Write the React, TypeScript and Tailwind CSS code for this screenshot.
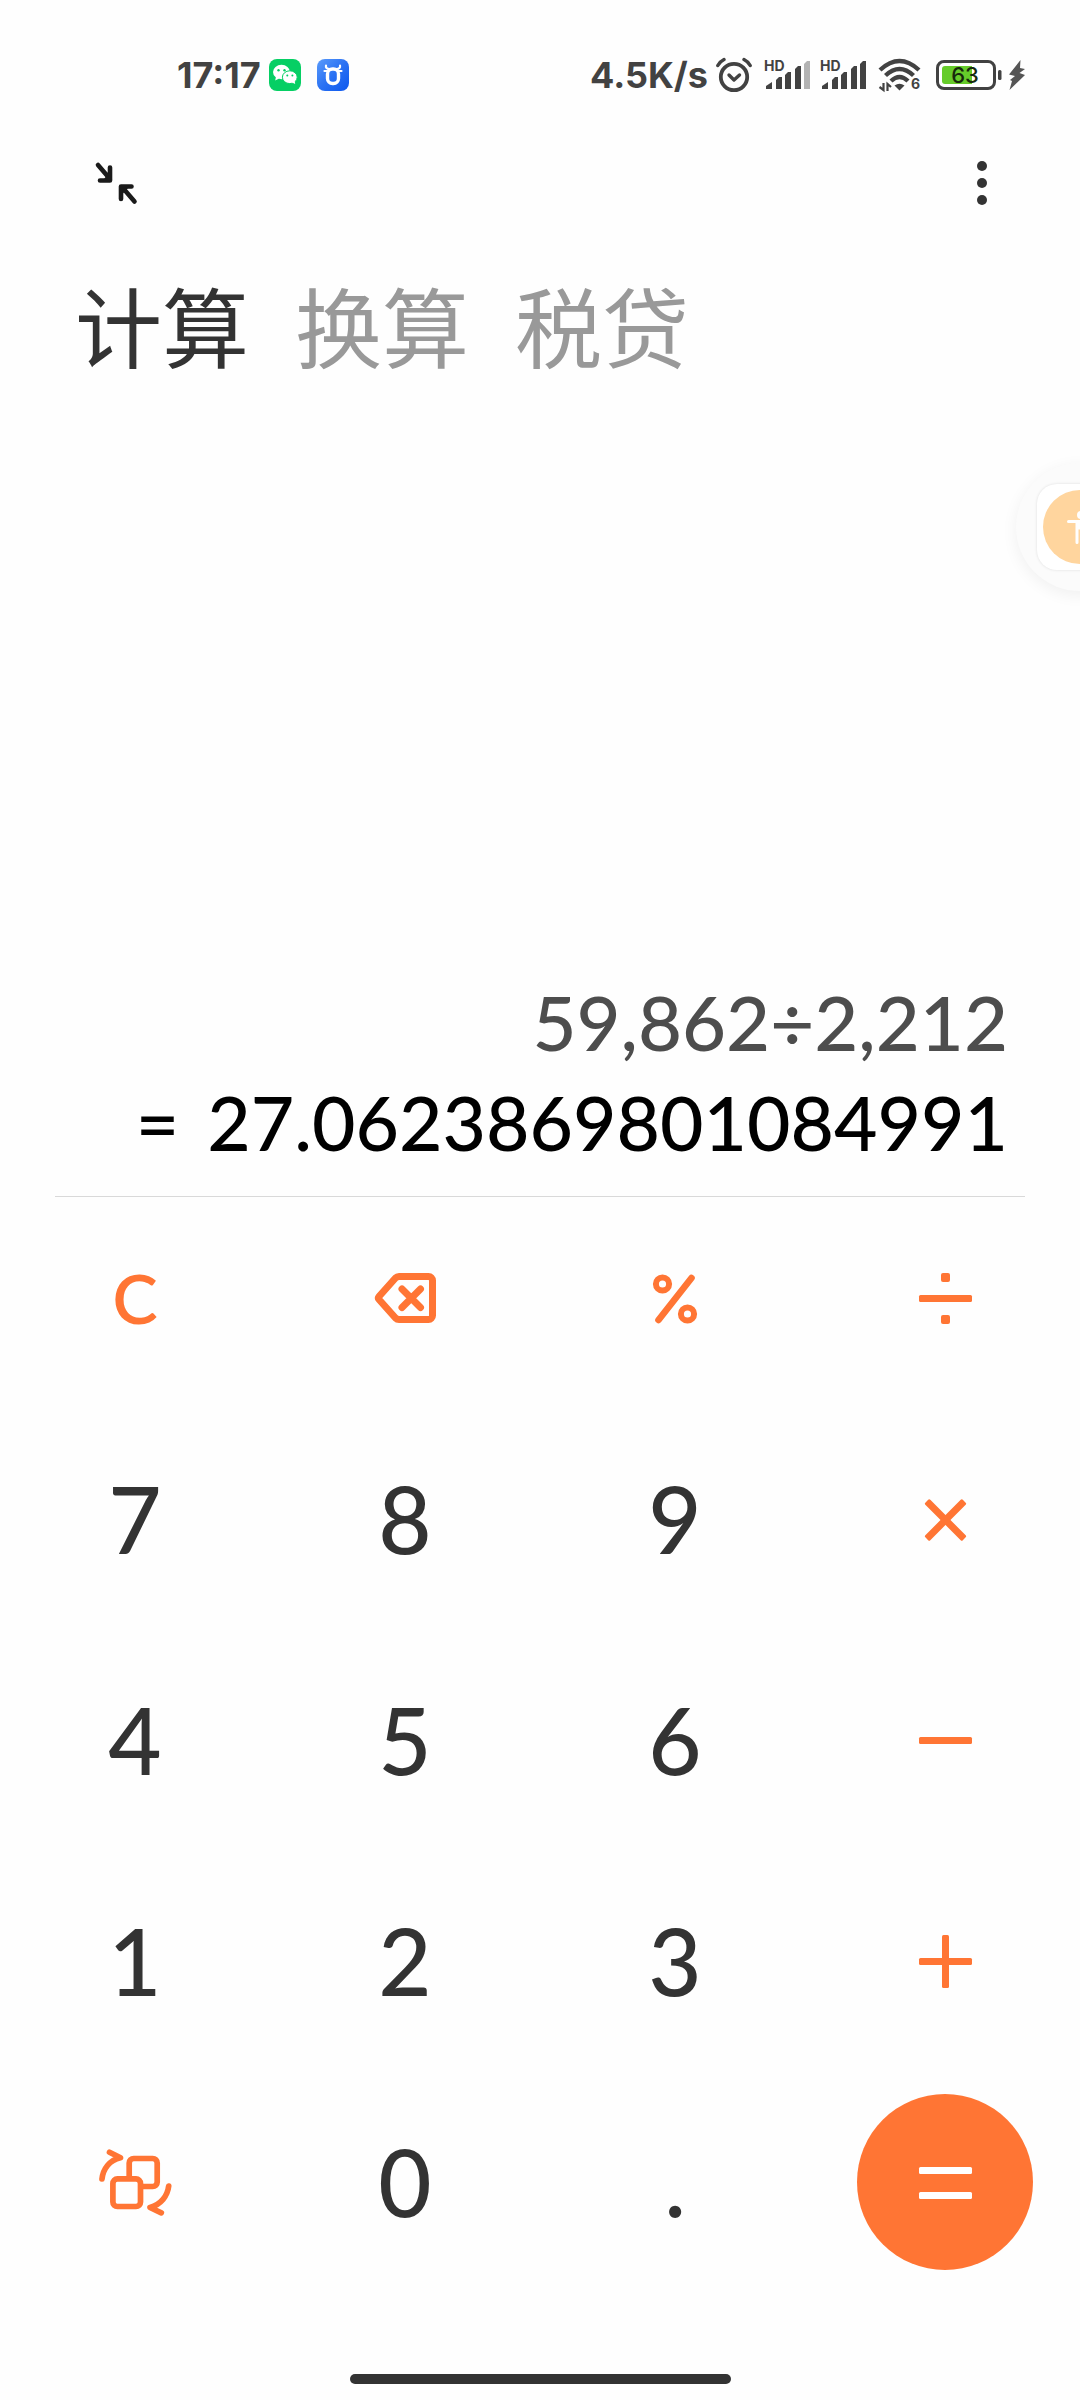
import type { ReactNode } from "react";
import { clsx } from "clsx";

const tabs = ["计算", "换算", "税贷"];

function WeChatIcon() {
  return (
    <svg viewBox="0 0 32 32" className="h-8 w-8">
      <rect width="32" height="32" rx="8" fill="#06cf64" />
      <ellipse cx="12.5" cy="13" rx="8.5" ry="7.2" fill="#fff" />
      <path d="M7 17.5l-.8 4 4-2z" fill="#fff" />
      <circle cx="9.5" cy="11.2" r="1.2" fill="#06cf64" />
      <circle cx="15.5" cy="11.2" r="1.2" fill="#06cf64" />
      <ellipse cx="20.8" cy="18.2" rx="7.4" ry="6.4" fill="#fff" stroke="#06cf64" />
      <path d="M23 23.4l3.2 1.6-.6-3.4z" fill="#fff" />
      <circle cx="18.3" cy="16.6" r="1" fill="#06cf64" />
      <circle cx="23.4" cy="16.6" r="1" fill="#06cf64" />
    </svg>
  );
}

function BullIcon() {
  return (
    <svg viewBox="0 0 32 32" className="h-8 w-8">
      <defs>
        <linearGradient id="bull" x1="0" y1="0" x2="1" y2="1">
          <stop offset="0" stopColor="#5a9bfb" />
          <stop offset="0.5" stopColor="#2b72f3" />
          <stop offset="1" stopColor="#0c57ee" />
        </linearGradient>
      </defs>
      <rect width="32" height="32" rx="8" fill="url(#bull)" />
      <rect x="10.5" y="10" width="11" height="14.5" rx="5" fill="none" stroke="#fff" strokeWidth="3.4" />
      <path
        d="M9 6.5c-.5 2 .8 3.5 3.5 3.7M23 6.5c.5 2-.8 3.5-3.5 3.7M7.5 12h3M21.5 12h3"
        fill="none"
        stroke="#fff"
        strokeWidth="2.2"
        strokeLinecap="round"
      />
    </svg>
  );
}

function AlarmIcon() {
  return (
    <svg viewBox="0 0 36 36" className="h-9 w-9" fill="none" stroke="#424242" strokeLinecap="round" strokeLinejoin="round">
      <circle cx="18" cy="20" r="13.2" strokeWidth="3.8" />
      <path d="M13 18l5 5 5.5-5" strokeWidth="3.4" />
      <path d="M1.8 8.5Q4 4.5 8 2.5M34.2 8.5Q32 4.5 28 2.5" strokeWidth="3.4" />
    </svg>
  );
}

function SignalIcon({ weak = false }: { weak?: boolean }) {
  return (
    <svg viewBox="0 0 46 36" className="h-9 w-[46px]" fill="#424242">
      <text x="0" y="14" fontSize="14" fontWeight="700" fontFamily="Inter, sans-serif">
        HD
      </text>
      <path d="M2 32v-3l6-4v7z" />
      <path d="M12 32v-9l3-3h3v12z" />
      <path d="M21 32V18l3-3h3v17z" />
      <path d="M31 32V12l3-3h3v23z" />
      <path d="M40 32V7l3-3h3v28z" fill={weak ? "#b3b3b3" : "#424242"} />
    </svg>
  );
}

function WifiIcon() {
  return (
    <svg viewBox="0 0 44 36" className="h-9 w-11" fill="none" stroke="#424242">
      <path d="M2 13Q21.5-5 41 13" strokeWidth="4.4" />
      <path d="M7.5 18.5Q21.5 5.5 35.5 18.5" strokeWidth="4.4" />
      <path d="M13 24Q21.5 16 30 24" strokeWidth="4.4" />
      <path d="M16.5 28.5q5-3.5 10 0l-5 5z" fill="#424242" stroke="none" />
      <path d="M5.5 26v7l-4-3M9.5 34v-7l3.5 3" strokeWidth="2.2" />
      <text x="33" y="32" fontSize="14" fontWeight="700" fontFamily="Inter, sans-serif" fill="#424242" stroke="none">
        6
      </text>
    </svg>
  );
}

function BatteryIcon() {
  return (
    <svg viewBox="0 0 66 30" className="h-[30px] w-[66px]">
      <rect x="1.5" y="1.5" width="57" height="27" rx="6.5" fill="#fff" stroke="#424242" strokeWidth="3" />
      <path d="M9 6h27v18H9a3 3 0 0 1-3-3V9a3 3 0 0 1 3-3z" fill="#66cc2a" />
      <rect x="62" y="10" width="3.5" height="10" rx="1.5" fill="#424242" />
      <text x="29" y="23" textAnchor="middle" fontSize="22" fontWeight="500" fontFamily="Inter, sans-serif" fill="#16290c">
        63
      </text>
    </svg>
  );
}

function BoltIcon() {
  return (
    <svg viewBox="0 0 18 30" className="h-[30px] w-[18px]" fill="#555">
      <path d="M12.5 0L1 14.5l6 1.5L2 20l2 1L1.5 30 17 15l-5.5-2L17 9l-5-1z" />
    </svg>
  );
}

function StatusBar() {
  return (
    <div className="flex h-[150px] items-center justify-between pl-[177px] pr-[54px] font-[Inter,sans-serif] text-[36px] font-bold leading-none text-[#424242]">
      <div className="flex items-center gap-2">
        <span>17:17</span>
        <div className="flex gap-4">
          <WeChatIcon />
          <BullIcon />
        </div>
      </div>
      <div className="flex items-center gap-2">
        <span>4.5K/s</span>
        <AlarmIcon />
        <div className="flex gap-[10px] px-1">
          <SignalIcon weak />
          <SignalIcon />
        </div>
        <WifiIcon />
        <div className="flex items-center gap-1.5 pl-1.5">
          <BatteryIcon />
          <BoltIcon />
        </div>
      </div>
    </div>
  );
}

function KeyIcon({ children }: { children: ReactNode }) {
  return (
    <svg viewBox="0 0 80 80" className="h-20 w-20" fill="none" stroke="currentColor" strokeWidth="7">
      {children}
    </svg>
  );
}

const backspace = (
  <KeyIcon>
    <g strokeLinecap="round" strokeLinejoin="round">
      <path d="M34 18.5h29.5a4 4 0 0 1 4 4v35a4 4 0 0 1-4 4H34q-2 0-3.5-1.5L14 41.5q-1.3-1.5 0-3L30.5 20q1.5-1.5 3.5-1.5z" />
      <path d="M37 31l18.5 18.5M55.5 31L37 49.5" />
    </g>
  </KeyIcon>
);

const percent = (
  <KeyIcon>
    <circle cx="27.5" cy="26" r="6.6" strokeWidth="6" />
    <circle cx="52.5" cy="56" r="6.6" strokeWidth="6" />
    <path d="M56.5 20L23.5 62" strokeWidth="6.6" strokeLinecap="round" />
  </KeyIcon>
);

const divide = (
  <KeyIcon>
    <g fill="currentColor" stroke="none">
      <rect x="14" y="37" width="53" height="7" rx="1.5" />
      <rect x="36" y="15" width="9" height="9" rx="2" />
      <rect x="36" y="57" width="9" height="9" rx="2" />
    </g>
  </KeyIcon>
);

const multiply = (
  <KeyIcon>
    <g fill="currentColor" stroke="none">
      <rect x="14" y="37.5" width="53" height="7" rx="1.5" transform="rotate(45 40.5 41)" />
      <rect x="14" y="37.5" width="53" height="7" rx="1.5" transform="rotate(-45 40.5 41)" />
    </g>
  </KeyIcon>
);

const minus = (
  <KeyIcon>
    <rect x="14" y="37" width="53" height="7" rx="1.5" fill="currentColor" stroke="none" />
  </KeyIcon>
);

const plus = (
  <KeyIcon>
    <g fill="currentColor" stroke="none">
      <rect x="14" y="37" width="53" height="7" rx="1.5" />
      <rect x="37" y="14" width="7" height="53" rx="1.5" />
    </g>
  </KeyIcon>
);

const equals = (
  <KeyIcon>
    <g fill="currentColor" stroke="none">
      <rect x="14" y="25" width="53" height="7" rx="1.5" />
      <rect x="14" y="50" width="53" height="7" rx="1.5" />
    </g>
  </KeyIcon>
);

const convert = (
  <KeyIcon>
    <g strokeWidth="5.7" strokeLinecap="round" strokeLinejoin="round">
      <rect x="17.9" y="36.9" width="27.6" height="27.6" rx="4.5" />
      <path d="M34.2 36V21a4.5 4.5 0 0 1 4.5-4.5h19A4.5 4.5 0 0 1 62.2 21v19a4.5 4.5 0 0 1-4.5 4.5H47" />
      <path d="M7 37C8 27 14.5 18 25.5 15.7L14.5 10.3" />
      <path d="M73.7 44C72.5 54 66 62.5 55 65.5L66.3 70.8" />
    </g>
  </KeyIcon>
);

type Key = { label: string; icon?: ReactNode; kind?: "op" | "equals" };

const keys: Key[] = [
  { label: "C", kind: "op" },
  { label: "退格", icon: backspace, kind: "op" },
  { label: "百分比", icon: percent, kind: "op" },
  { label: "除", icon: divide, kind: "op" },
  { label: "7" },
  { label: "8" },
  { label: "9" },
  { label: "乘", icon: multiply, kind: "op" },
  { label: "4" },
  { label: "5" },
  { label: "6" },
  { label: "减", icon: minus, kind: "op" },
  { label: "1" },
  { label: "2" },
  { label: "3" },
  { label: "加", icon: plus, kind: "op" },
  { label: "切换", icon: convert, kind: "op" },
  { label: "0" },
  { label: "." },
  { label: "等于", icon: equals, kind: "equals" },
];

function Keypad() {
  return (
    <div className="grid grid-cols-4 justify-items-center gap-y-[45px] pt-[13px]">
      {keys.map((key) => (
        <button
          key={key.label}
          type="button"
          aria-label={key.label}
          className={clsx(
            "flex h-[176px] w-[176px] items-center justify-center rounded-full leading-none",
            !key.kind && "text-[92px] font-medium text-[#333]",
            key.kind === "op" && "text-[68px] font-semibold text-[#ff7534]",
            key.kind === "equals" && "bg-[#ff7534] text-white",
          )}
        >
          {key.icon ?? key.label}
        </button>
      ))}
    </div>
  );
}

function AssistBubble() {
  return (
    <button
      type="button"
      aria-label="悬浮球"
      className="absolute -right-16 top-[463px] flex h-32 w-32 items-center justify-center rounded-full bg-[#fbfbfb] shadow-[0_4px_16px_rgba(0,0,0,0.06)]"
    >
      <span className="flex h-[86px] w-[86px] items-center justify-center rounded-[20px] bg-white shadow-[0_0_3px_rgba(0,0,0,0.12)]">
        <svg viewBox="0 0 74 74" className="h-[74px] w-[74px]">
          <circle cx="37" cy="37" r="37" fill="#ffd59e" />
          <circle cx="38" cy="25" r="4" fill="#fff" />
          <path d="M25.5 31.5h25M34 31.5v21M42 31.5v21" fill="none" stroke="#fff" strokeWidth="3" strokeLinecap="round" />
          <path d="M34 31.5h8v8h-8z" fill="#fff" />
        </svg>
      </span>
    </button>
  );
}

export default function App() {
  return (
    <div className="relative flex min-h-screen flex-col overflow-hidden bg-[#fefefe] font-[Lato,'Noto_Sans_CJK_SC',sans-serif]">
      <StatusBar />

      <header className="flex h-[66px] items-center justify-between pl-[94px] pr-[88px]">
        <button type="button" aria-label="收起">
          <svg viewBox="0 0 44 44" className="h-11 w-11" fill="none" stroke="#1a1a1a" strokeWidth="4.6" strokeLinecap="round" strokeLinejoin="round">
            <path d="M4 4l12 14M16 6.5v13H6" />
            <path d="M40.5 40.5l-12-14M27 38V25.5h10.5" />
            <path d="M16 12v7.5H10z M27 33v-7.5h7z" fill="#1a1a1a" strokeWidth="2" />
          </svg>
        </button>
        <button type="button" aria-label="更多" className="flex w-5 flex-col items-center gap-[7px]">
          <span className="h-[10px] w-[10px] rounded-full bg-[#333]" />
          <span className="h-[10px] w-[10px] rounded-full bg-[#333]" />
          <span className="h-[10px] w-[10px] rounded-full bg-[#333]" />
        </button>
      </header>

      <nav className="flex gap-[46px] pl-[75px] pt-[65px] font-['Noto_Sans_CJK_SC',sans-serif] text-[87px] leading-none">
        {tabs.map((tab, i) => (
          <button key={tab} type="button" className={i === 0 ? "text-[#333]" : "text-[#999]"}>
            {tab}
          </button>
        ))}
      </nav>

      <main className="flex flex-1 flex-col justify-end">
        <div className="px-[72px] pb-6 text-right font-medium leading-[100px]">
          <p className="text-[76px] text-[#4d4d4d]">59,862÷2,212</p>
          <p className="flex justify-end gap-7 text-[75px] text-black">
            <span>=</span>
            <span>27.0623869801084991</span>
          </p>
        </div>
        <hr className="mx-[55px] border-[#d9d9d9]" />
      </main>

      <Keypad />

      <footer className="flex justify-center pb-4 pt-[104px]">
        <div className="h-[10px] w-[381px] rounded-full bg-[#333]" />
      </footer>

      <AssistBubble />
    </div>
  );
}
